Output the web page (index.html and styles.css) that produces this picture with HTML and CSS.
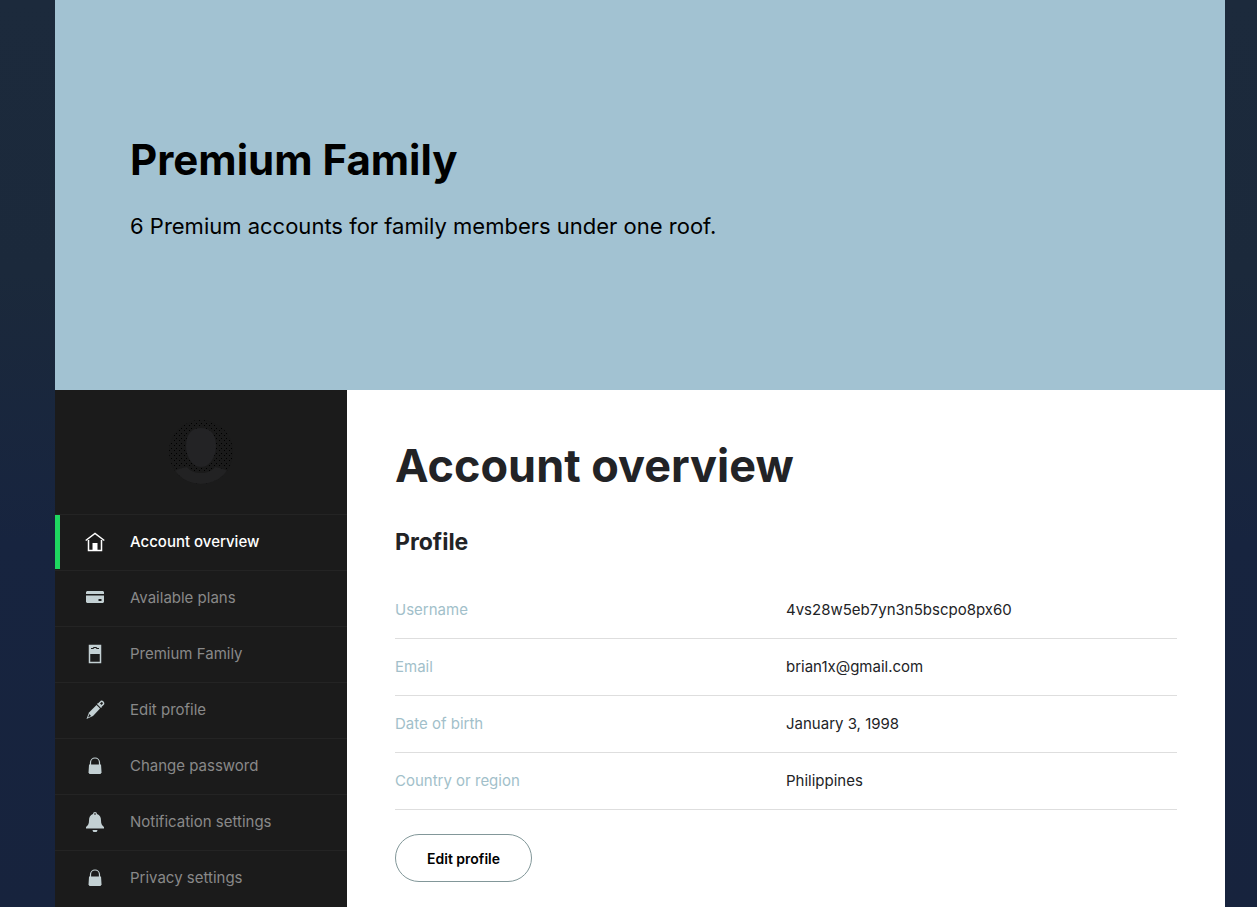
FILE: index.html
```html
<!DOCTYPE html>
<html lang="en">
<head>
    <meta charset="UTF-8">
    <meta name="viewport" content="width=device-width, initial-scale=1">
    <title>Account overview</title>
    <link rel="stylesheet" href="styles.css">
</head>
<body>
    <div class="page">
        <header class="hero">
            <h1>Premium Family</h1>
            <p>6 Premium accounts for family members under one roof.</p>
        </header>
        <div class="content">
            <aside class="sidebar">
                <div class="avatar">
                    <svg viewBox="0 0 64 64" aria-hidden="true">
                        <defs>
                            <pattern id="dots" width="5" height="5" patternUnits="userSpaceOnUse">
                                <rect width="1" height="1" fill="#000"/>
                                <rect x="2" y="3" width="1" height="1" fill="#000"/>
                            </pattern>
                            <clipPath id="circle"><circle cx="32" cy="32" r="32"/></clipPath>
                        </defs>
                        <g clip-path="url(#circle)">
                            <rect width="64" height="64" fill="#1a1a1a"/>
                            <rect width="64" height="64" fill="url(#dots)"/>
                            <path d="M0 64V54C8 49 13 48 18 47c3 4 8 6 14 6s11-2 14-6c5 1 10 2 18 7v10z" fill="#222223"/>
                            <path d="M32 8c-10 0-15 7-15 18 0 10 6 21 15 21s15-11 15-21C47 15 42 8 32 8z" fill="#232325"/>
                        </g>
                    </svg>
                </div>
                <nav>
                    <ul class="menu">
                        <li class="active"><a href="#">
                            <svg viewBox="0 0 20 20" aria-hidden="true"><path d="M.7 8.500L10 1.500l9.300 7M3.500 8v10.500h13V8" fill="none" stroke="currentColor" stroke-width="1.500"/><path d="M7.500 11h5v7.500h-5z" fill="currentColor"/></svg>
                            Account overview</a></li>
                        <li><a href="#">
                            <svg viewBox="0 0 20 20" aria-hidden="true"><path d="M2 3h16l1 1v2H1V4zM1 7.500h18V14l-1 1H2l-1-1z" fill="currentColor"/><path d="M13.500 11h3v2h-3z" fill="#1b1b1b"/></svg>
                            Available plans</a></li>
                        <li><a href="#">
                            <svg viewBox="0 0 20 20" aria-hidden="true"><path d="M4.500 1.500h11v17h-11z" fill="none" stroke="currentColor" stroke-width="1.500"/><path d="M4 1h12v9H4z" fill="currentColor"/><path d="M6 4.500h2L9 3.500h2l1 1h2" fill="none" stroke="#1b1b1b" stroke-width="1.200"/></svg>
                            Premium Family</a></li>
                        <li><a href="#">
                            <svg viewBox="0 0 20 20" aria-hidden="true"><path d="M11.500 5l3.500 3.500-7 7.500-6.500 3L4 12.500z" fill="currentColor"/><path d="M14 3.500l2-2q1-.5 2 .5t.5 2l-2 2z" fill="none" stroke="currentColor" stroke-width="1.500"/><path d="M12.500 3.500l4 4" fill="none" stroke="currentColor" stroke-width="1.500"/><path d="M4.500 14l1.500 2-3 1.500z" fill="#1b1b1b"/></svg>
                            Edit profile</a></li>
                        <li><a href="#">
                            <svg viewBox="0 0 20 20" aria-hidden="true"><path d="M5.500 9V6.500a4.500 4.500 0 0 1 9 0V9" fill="none" stroke="currentColor" stroke-width="1.200"/><path d="M4 8.500h12l.5 8-1 1.500h-11l-1-1.500z" fill="currentColor"/></svg>
                            Change password</a></li>
                        <li><a href="#">
                            <svg viewBox="0 0 20 20" aria-hidden="true"><path d="M8 2q0-2 2-2t2 2c3 1 4 3.500 4 6.500 0 3.500 1 5 3 6.500v1.500H1V15c2-1.500 3-3 3-6.500C4 5.500 5 3 8 2zM7.500 18h5q-.5 2.500-2.500 2.500T7.500 18z" fill="currentColor"/><path d="M9 2h2" stroke="#1b1b1b"/></svg>
                            Notification settings</a></li>
                        <li><a href="#">
                            <svg viewBox="0 0 20 20" aria-hidden="true"><path d="M5.500 9V6.500a4.500 4.500 0 0 1 9 0V9" fill="none" stroke="currentColor" stroke-width="1.200"/><path d="M4 8.500h12l.5 8-1 1.500h-11l-1-1.500z" fill="currentColor"/></svg>
                            Privacy settings</a></li>
                    </ul>
                </nav>
            </aside>
            <main class="overview">
                <h2>Account overview</h2>
                <h3>Profile</h3>
                <table class="profile">
                    <tr><th scope="row">Username</th><td>4vs28w5eb7yn3n5bscpo8px60</td></tr>
                    <tr><th scope="row">Email</th><td>brian1x@gmail.com</td></tr>
                    <tr><th scope="row">Date of birth</th><td>January 3, 1998</td></tr>
                    <tr><th scope="row">Country or region</th><td>Philippines</td></tr>
                </table>
                <button class="btn" type="button">Edit profile</button>
            </main>
        </div>
    </div>
</body>
</html>
```
FILE: styles.css
```css
* {
    box-sizing: border-box;
}

body {
    margin: 0;
    padding: 0 32px 0 55px;
    min-height: 100vh;
    background: linear-gradient(#1c2a3c 0, #1b293b 30%, #17243f 60%, #17233d 100%);
    font-family: Inter, "Liberation Sans", sans-serif;
    font-size: 15px;
    line-height: 24px;
    color: #222326;
}

h1, h2, h3, p {
    margin: 0;
}

.page {
    max-width: 1170px;
    margin: 0 auto;
}

.hero {
    display: flex;
    flex-direction: column;
    justify-content: center;
    gap: 20px;
    min-height: 390px;
    padding: 0 75px 14px;
    background-color: #a2c2d2;
    color: #000;
}

.hero h1 {
    font-size: 42px;
    line-height: 56px;
    font-weight: 700;
}

.hero p {
    font-size: 22px;
    line-height: 36px;
}

.content {
    display: grid;
    grid-template-columns: 292px 1fr;
    min-height: calc(100vh - 390px);
}

.sidebar {
    background-color: #1b1b1b;
}

.avatar {
    padding: 30px 0;
}

.avatar svg {
    display: block;
    width: 64px;
    height: 64px;
    margin: 0 auto;
}

.menu {
    margin: 0;
    padding: 0;
    list-style: none;
}

.menu li {
    padding-bottom: 1px;
    border-top: 1px solid #242424;
}

.menu a {
    display: flex;
    align-items: center;
    gap: 25px;
    height: 54px;
    padding-left: 25px;
    border-left: 5px solid transparent;
    color: #898989;
    text-decoration: none;
}

.menu svg {
    width: 20px;
    height: 20px;
    color: #c3d0d3;
}

.menu .active a {
    border-left-color: #1ed760;
    color: #fff;
    font-weight: 500;
}

.menu .active svg {
    color: #fff;
}

.overview {
    padding: 48px 48px 25px;
    background-color: #fff;
}

.overview h2 {
    font-size: 45px;
    line-height: 56px;
}

.overview h3 {
    margin-top: 32px;
    font-size: 23px;
    line-height: 32px;
}

.profile {
    width: 100%;
    margin: 24px 0;
    border-spacing: 0;
    table-layout: fixed;
}

.profile th,
.profile td {
    height: 57px;
    padding: 0;
    border-bottom: 1px solid #dedede;
    text-align: left;
    font-weight: 400;
}

.profile th {
    color: #a2bfca;
}

.btn {
    height: 48px;
    padding: 0 31px;
    border: 1px solid #829799;
    border-radius: 24px;
    background: #fff;
    color: #000;
    font-family: inherit;
    font-size: 14px;
    font-weight: 600;
}
```
